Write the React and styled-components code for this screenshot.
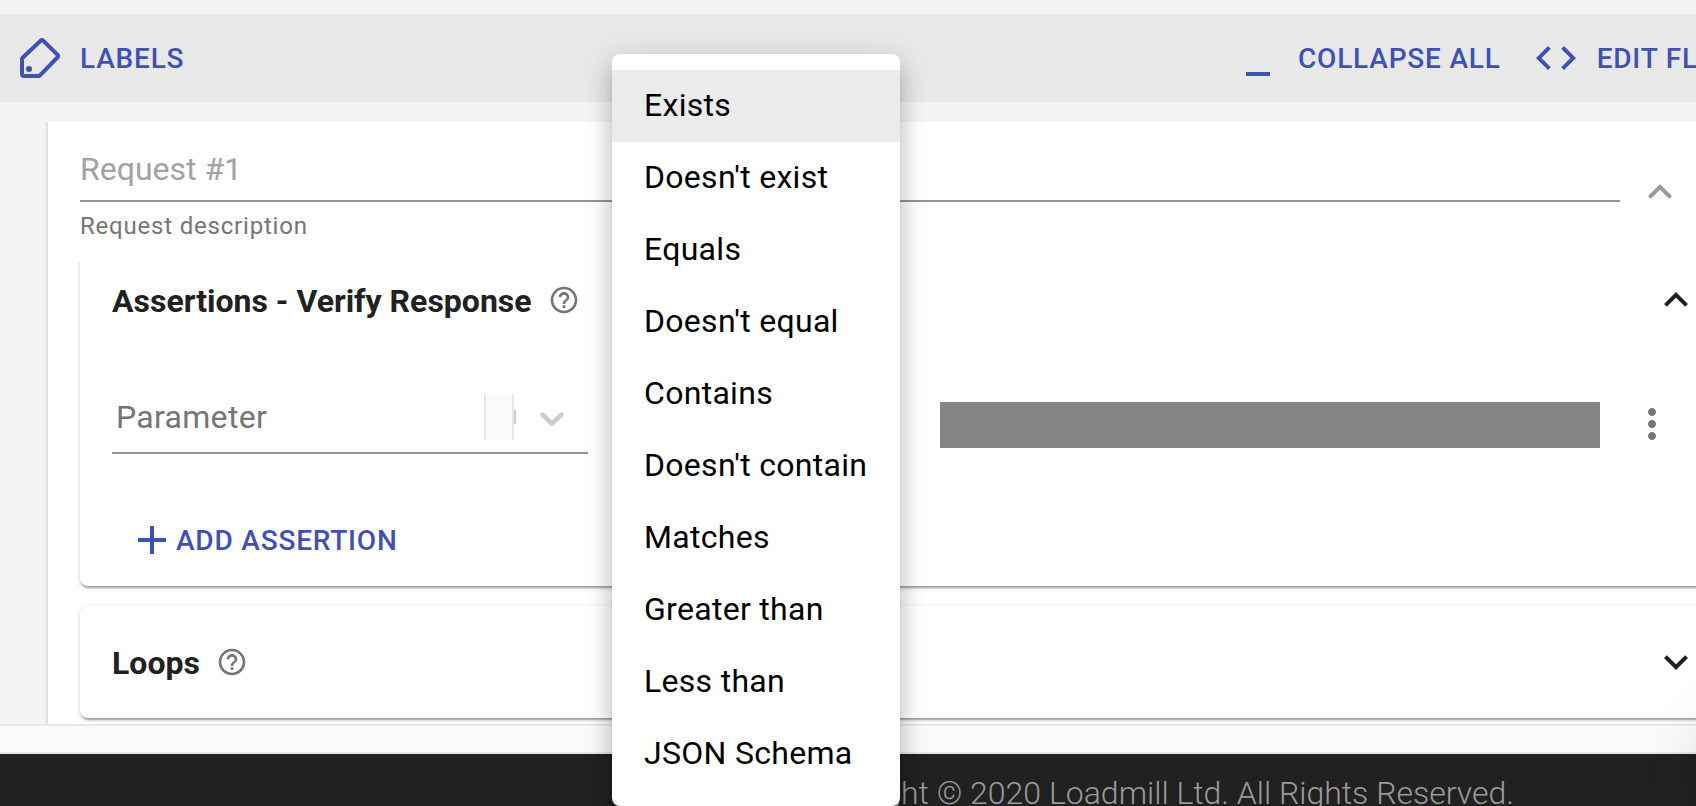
import React from "react";
import styled, { createGlobalStyle } from "styled-components";

const Global = createGlobalStyle`
  * { box-sizing: border-box; }
  html, body { margin: 0; background: #f4f4f4; }
  body { overflow: hidden; font-family: Roboto, "Liberation Sans", sans-serif; color: #212121; }
`;

const Page = styled.div`
  position: relative;
  display: flex;
  flex-direction: column;
  width: 1696px;
  height: 806px;
  padding-top: 14px;
  overflow: hidden;
  background: #f4f4f4;
`;

const Toolbar = styled.header`
  flex: none;
  display: flex;
  align-items: center;
  height: 88px;
  padding-left: 16px;
  background: #e8e8e8;
`;

const ToolbarEnd = styled.div`
  display: flex;
  align-items: center;
  width: 462px;
  margin-left: auto;
  gap: 31px;
`;

const TextButton = styled.button`
  display: inline-flex;
  flex: none;
  align-items: center;
  gap: ${(p) => p.$gap}px;
  padding: 0;
  border: 0;
  background: none;
  color: #3f51b5;
  font: 500 28px/46px Roboto, "Liberation Sans", sans-serif;
  letter-spacing: 0.8px;
  text-transform: uppercase;
  white-space: nowrap;
`;

const ButtonLabel = styled.span`
  padding-top: 2px;
`;

const Glyph = styled.svg`
  display: block;
  flex: none;
  width: ${(p) => p.$size || 48}px;
  height: ${(p) => p.$size || 48}px;
  color: ${(p) => p.$color || "currentColor"};
  fill: currentColor;
`;

const Viewport = styled.main`
  flex: none;
  height: 602px;
  margin-top: 20px;
  padding-left: 48px;
  overflow: hidden;
`;

const RequestCard = styled.section`
  height: 700px;
  width: 1760px;
  margin-top: -16px;
  padding: 16px 0 0 28px;
  background: #fff;
  box-shadow: 0 4px 2px -2px rgba(0,0,0,.2), 0 2px 2px rgba(0,0,0,.14), 0 2px 6px rgba(0,0,0,.12);
`;

const RequestHead = styled.div`
  display: flex;
  align-items: flex-start;
  gap: 16px;
  height: 140px;
  padding-left: 4px;
`;

const DescriptionField = styled.div`
  width: 1540px;
`;

const FieldValue = styled.div`
  height: 80px;
  padding-top: 28px;
  border-bottom: 2px solid #949494;
  font-size: 32px;
  line-height: 38px;
  color: #a2a2a2;
`;

const Helper = styled.div`
  padding-top: 10px;
  font-size: 24px;
  line-height: 28px;
  letter-spacing: 0.8px;
  color: #757575;
`;

const HeadToggle = styled.div`
  padding-top: 46px;
`;

const Panels = styled.div`
  display: flex;
  flex-direction: column;
  gap: 20px;
  padding-left: 4px;
  overflow: hidden;
  height: 480px;
`;

const Panel = styled.section`
  flex: none;
  height: ${(p) => p.$height}px;
  margin-top: ${(p) => p.$lift || 0}px;
  padding: ${(p) => p.$top}px 0 0 32px;
  border-radius: 8px;
  background: #fff;
  box-shadow: 0 4px 2px -2px rgba(0,0,0,.2), 0 2px 2px rgba(0,0,0,.14), 0 2px 6px rgba(0,0,0,.12);
`;

const PanelHead = styled.div`
  display: flex;
  align-items: center;
  width: 1588px;
  height: 48px;
`;

const PanelTitle = styled.h2`
  margin: 0 16px 0 0;
  padding-top: 2px;
  font-size: 32px;
  line-height: 48px;
  font-weight: 700;
`;

const PanelToggle = styled.div`
  margin-left: auto;
`;

const AssertionRow = styled.div`
  display: flex;
  align-items: flex-start;
  height: 60px;
  margin-top: 70px;
`;

const ParameterSelect = styled.div`
  display: flex;
  align-items: flex-start;
  width: 476px;
  height: 60px;
  padding-left: 4px;
  border-bottom: 2px solid #949494;
`;

const Placeholder = styled.span`
  flex: 1;
  padding-top: 4px;
  font-size: 32px;
  line-height: 38px;
  letter-spacing: 0.3px;
  color: #757575;
`;

const ClearBox = styled.span`
  width: 30px;
  height: 46px;
  border: solid #e8e8e8;
  border-width: 0 2px;
  background: #fafafa;
`;

const Divider = styled.span`
  width: 2px;
  height: 14px;
  margin-top: 16px;
  background: #ccc;
`;

const Arrow = styled.span`
  padding: 4px 16px 0 16px;
`;

const ValueBlock = styled.div`
  width: 660px;
  height: 46px;
  margin: 8px 28px 0 352px;
  background: #858585;
`;

const RowMenu = styled.div`
  padding-top: 6px;
`;

const AddRow = styled.div`
  margin-top: 62px;
  padding-left: 16px;
`;

const Strip = styled.div`
  flex: none;
  height: 30px;
  border-top: 2px solid #e7e7e7;
  border-bottom: 2px solid #e7e7e7;
  background: #fafafa;
`;

const CornerShade = styled.div`
  position: absolute;
  right: -74px;
  bottom: -20px;
  width: 60px;
  height: 110px;
  border-radius: 60px;
  box-shadow: 0 0 60px 6px rgba(0,0,0,.13);
`;

const Footer = styled.footer`
  flex: none;
  display: flex;
  justify-content: flex-end;
  height: 52px;
  padding: 19px 182px 0 0;
  overflow: hidden;
  background: #212121;
  color: #9b9b9b;
  font-size: 32px;
  line-height: 40px;
  font-weight: 300;
  white-space: nowrap;
`;

const Menu = styled.ul`
  position: absolute;
  left: 612px;
  top: 54px;
  width: 288px;
  margin: 0;
  padding: 16px 0;
  list-style: none;
  border-radius: 8px;
  background: #fff;
  box-shadow: 0 10px 10px -6px rgba(0,0,0,.2), 0 16px 20px 2px rgba(0,0,0,.14), 0 6px 28px 4px rgba(0,0,0,.12);
`;

const MenuItem = styled.li`
  height: 72px;
  padding: 0 32px;
  background: ${(p) => (p.$selected ? "#ebebeb" : "transparent")};
  color: #000;
  font-size: 32px;
  line-height: 70px;
  letter-spacing: 0.3px;
  white-space: nowrap;
`;

const options = [
  "Exists", "Doesn't exist", "Equals", "Doesn't equal", "Contains",
  "Doesn't contain", "Matches", "Greater than", "Less than", "JSON Schema",
];

const Icon = ({ d, size, color, box = 24 }) => (
  <Glyph viewBox={`0 0 ${box} ${box}`} $size={size} $color={color} aria-hidden="true">
    <path d={d} />
  </Glyph>
);

const UP = "M12 8l-6 6 1.41 1.41L12 10.83l4.59 4.58L18 14z";
const DOWN = "M16.59 8.59L12 13.17 7.41 8.59 6 10l6 6 6-6z";
const HELP = "M11 18h2v-2h-2v2zm1-16C6.48 2 2 6.48 2 12s4.48 10 10 10 10-4.48 10-10S17.52 2 12 2zm0 18c-4.41 0-8-3.59-8-8s3.59-8 8-8 8 3.59 8 8-3.59 8-8 8zm0-14c-2.21 0-4 1.79-4 4h2c0-1.1.9-2 2-2s2 .9 2 2c0 2-3 1.75-3 5h2c0-2.25 3-2.5 3-5 0-2.21-1.79-4-4-4z";
const CODE = "M9.4 16.6L4.8 12l4.6-4.6L8 6l-6 6 6 6 1.4-1.4zm5.2 0l4.6-4.6-4.6-4.6L16 6l6 6-6 6-1.4-1.4z";
const DOTS = "M12 8c1.1 0 2-.9 2-2s-.9-2-2-2-2 .9-2 2 .9 2 2 2zm0 2c-1.1 0-2 .9-2 2s.9 2 2 2 2-.9 2-2-.9-2-2-2zm0 6c-1.1 0-2 .9-2 2s.9 2 2 2 2-.9 2-2-.9-2-2-2z";
const PLUS = "M19 13h-6v6h-2v-6H5v-2h6V5h2v6h6v2z";
const MINIMIZE = "M6 19h12v2H6z";
const CARET = "M4.516 7.548c0.436-0.446 1.043-0.481 1.576 0l3.908 3.747 3.908-3.747c0.533-0.481 1.141-0.446 1.574 0 0.436 0.445 0.408 1.197 0 1.615-0.406 0.418-4.695 4.502-4.695 4.502-0.217 0.223-0.502 0.335-0.787 0.335s-0.57-0.112-0.789-0.335c0 0-4.287-4.084-4.695-4.502s-0.436-1.17 0-1.615z";

const TagIcon = () => (
  <Glyph viewBox="0 0 48 48" $size={48} aria-hidden="true">
    <path
      d="M6 25.2V40a2 2 0 0 0 2 2h14.6a2 2 0 0 0 1.4-.6L41.4 23.5a2 2 0 0 0 0-2.8L27.4 6.8a2 2 0 0 0-2.8 0L6.6 23.8a2 2 0 0 0-.6 1.4z"
      fill="none"
      stroke="currentColor"
      strokeWidth="4"
    />
    <circle cx="13" cy="35" r="3" />
  </Glyph>
);

export default function App() {
  return (
    <Page>
      <Global />
      <Toolbar>
        <TextButton $gap={16}><TagIcon /><ButtonLabel>Labels</ButtonLabel></TextButton>
        <ToolbarEnd>
          <TextButton $gap={16}><Icon d={MINIMIZE} /><ButtonLabel>Collapse all</ButtonLabel></TextButton>
          <TextButton $gap={17}><Icon d={CODE} /><ButtonLabel>Edit flow</ButtonLabel></TextButton>
        </ToolbarEnd>
      </Toolbar>
      <Viewport>
        <RequestCard>
          <RequestHead>
            <DescriptionField>
              <FieldValue>Request #1</FieldValue>
              <Helper>Request description</Helper>
            </DescriptionField>
            <HeadToggle><Icon d={UP} color="#9b9b9b" /></HeadToggle>
          </RequestHead>
          <Panels>
            <Panel $height={340} $top={30} $lift={-16}>
              <PanelHead>
                <PanelTitle>Assertions - Verify Response</PanelTitle>
                <Icon d={HELP} size={32} color="#757575" />
                <PanelToggle><Icon d={UP} /></PanelToggle>
              </PanelHead>
              <AssertionRow>
                <ParameterSelect>
                  <Placeholder>Parameter</Placeholder>
                  <ClearBox />
                  <Divider />
                  <Arrow><Icon d={CARET} box={20} size={40} color="#ccc" /></Arrow>
                </ParameterSelect>
                <ValueBlock />
                <RowMenu><Icon d={DOTS} color="#757575" /></RowMenu>
              </AssertionRow>
              <AddRow>
                <TextButton $gap={0}><Icon d={PLUS} /><ButtonLabel>Add assertion</ButtonLabel></TextButton>
              </AddRow>
            </Panel>
            <Panel $height={112} $top={32}>
              <PanelHead>
                <PanelTitle>Loops</PanelTitle>
                <Icon d={HELP} size={32} color="#757575" />
                <PanelToggle><Icon d={DOWN} /></PanelToggle>
              </PanelHead>
            </Panel>
          </Panels>
        </RequestCard>
      </Viewport>
      <Strip />
      <Footer>Copyright © 2020 Loadmill Ltd. All Rights Reserved.</Footer>
      <CornerShade />
      <Menu>
        {options.map((label, i) => (
          <MenuItem key={label} $selected={i === 0}>{label}</MenuItem>
        ))}
      </Menu>
    </Page>
  );
}
